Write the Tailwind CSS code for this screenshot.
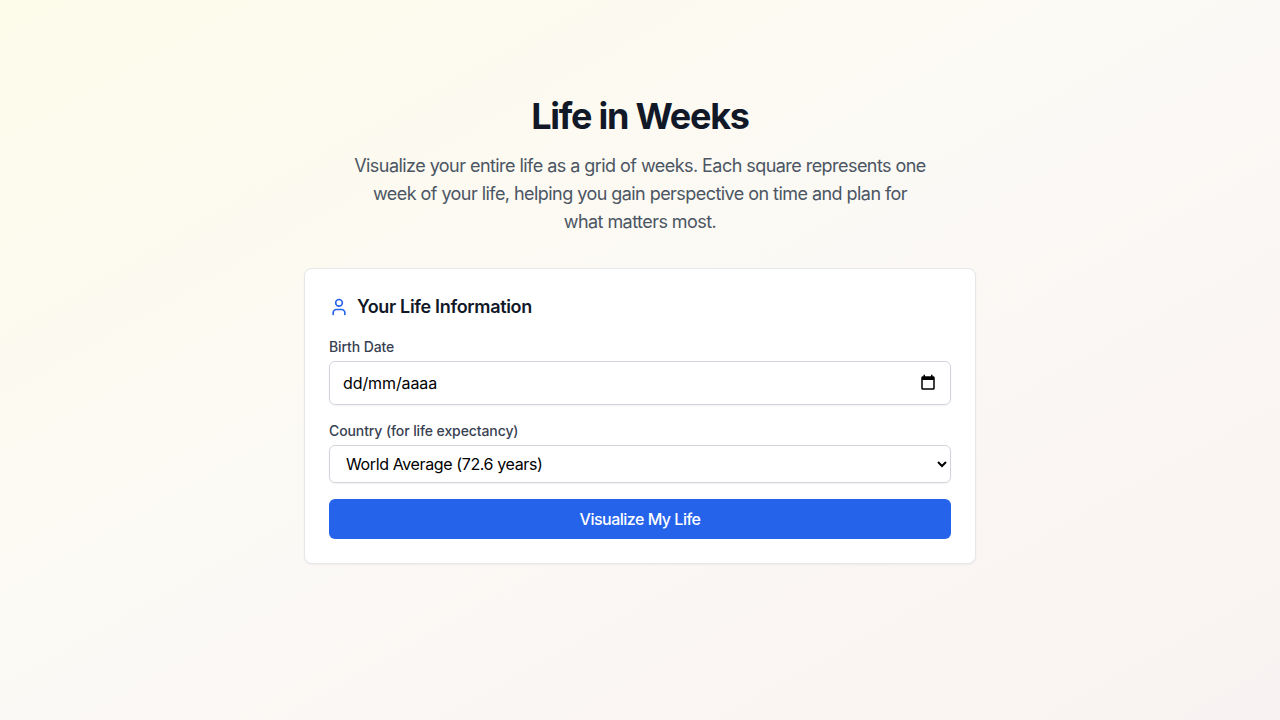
<!DOCTYPE html>
<html lang="es">
<head>
    <meta charset="UTF-8">
    <meta name="viewport" content="width=device-width, initial-scale=1.0">
    <title>Life in Weeks</title>
    <script src="https://cdn.jsdelivr.net/npm/@tailwindcss/browser@4"></script>
</head>
<body class="min-h-screen bg-gradient-to-br from-[#fdfbea] via-[#fbf9f5] to-[#f9f2f2] font-['Inter',sans-serif]">

    <main class="mx-auto max-w-2xl pt-24">
        <header class="mb-8 text-center">
            <h1 class="mb-4 text-4xl font-bold tracking-[-1.25px] text-[#111827]">Life in Weeks</h1>
            <p class="mx-auto max-w-xl text-lg tracking-[-0.55px] text-[#4b5563]">Visualize your entire life as a grid of weeks. Each square represents one week of your life, helping you gain perspective on time and plan for what matters most.</p>
        </header>

        <section class="rounded-lg border border-[#e5e7eb] bg-white p-6 shadow-xs">
            <h2 class="mb-4 flex items-center gap-2 text-lg font-semibold tracking-[-0.33px] text-[#111827]">
                <svg class="h-5 w-5 text-[#2563eb]" xmlns="http://www.w3.org/2000/svg" viewBox="0 0 24 24" fill="none" stroke="currentColor" stroke-width="2" stroke-linecap="round" stroke-linejoin="round">
                    <path d="M19 21v-2a4 4 0 0 0-4-4H9a4 4 0 0 0-4 4v2"></path>
                    <circle cx="12" cy="7" r="4"></circle>
                </svg>
                Your Life Information
            </h2>

            <form class="flex flex-col gap-4">
                <div>
                    <label class="mb-1 block text-sm font-medium tracking-[-0.1px] text-[#374151]">Birth Date</label>
                    <div class="relative">
                        <input type="text" value="dd/mm/aaaa" class="h-11 w-full rounded-md border border-[#d1d5db] pl-[13px] pr-3 tracking-[-0.1px] text-black shadow-xs">
                        <!-- browser locale can't be set, so the picker icon is drawn by hand -->
                        <svg class="absolute right-[14px] top-[13px] h-[18px] w-[18px]" xmlns="http://www.w3.org/2000/svg" viewBox="0 0 24 24" fill="#000">
                            <path d="M19 3h-1V1h-2v2H8V1H6v2H5c-1.11 0-1.99.9-1.99 2L3 19c0 1.1.89 2 2 2h14c1.1 0 2-.9 2-2V5c0-1.1-.9-2-2-2zm0 16H5V8h14v11z"></path>
                        </svg>
                    </div>
                </div>
                <div>
                    <label class="mb-1 block text-sm font-medium tracking-[-0.1px] text-[#374151]">Country (for life expectancy)</label>
                    <select class="h-[38px] w-full rounded-md border border-[#d1d5db] bg-white px-3 tracking-[-0.38px] text-black shadow-xs">
                        <option>World Average (72.6 years)</option>
                    </select>
                </div>
                <button type="button" class="h-10 w-full rounded-md bg-[#2563eb] font-medium tracking-[-0.5px] text-white">Visualize My Life</button>
            </form>
        </section>
    </main>

</body>
</html>
